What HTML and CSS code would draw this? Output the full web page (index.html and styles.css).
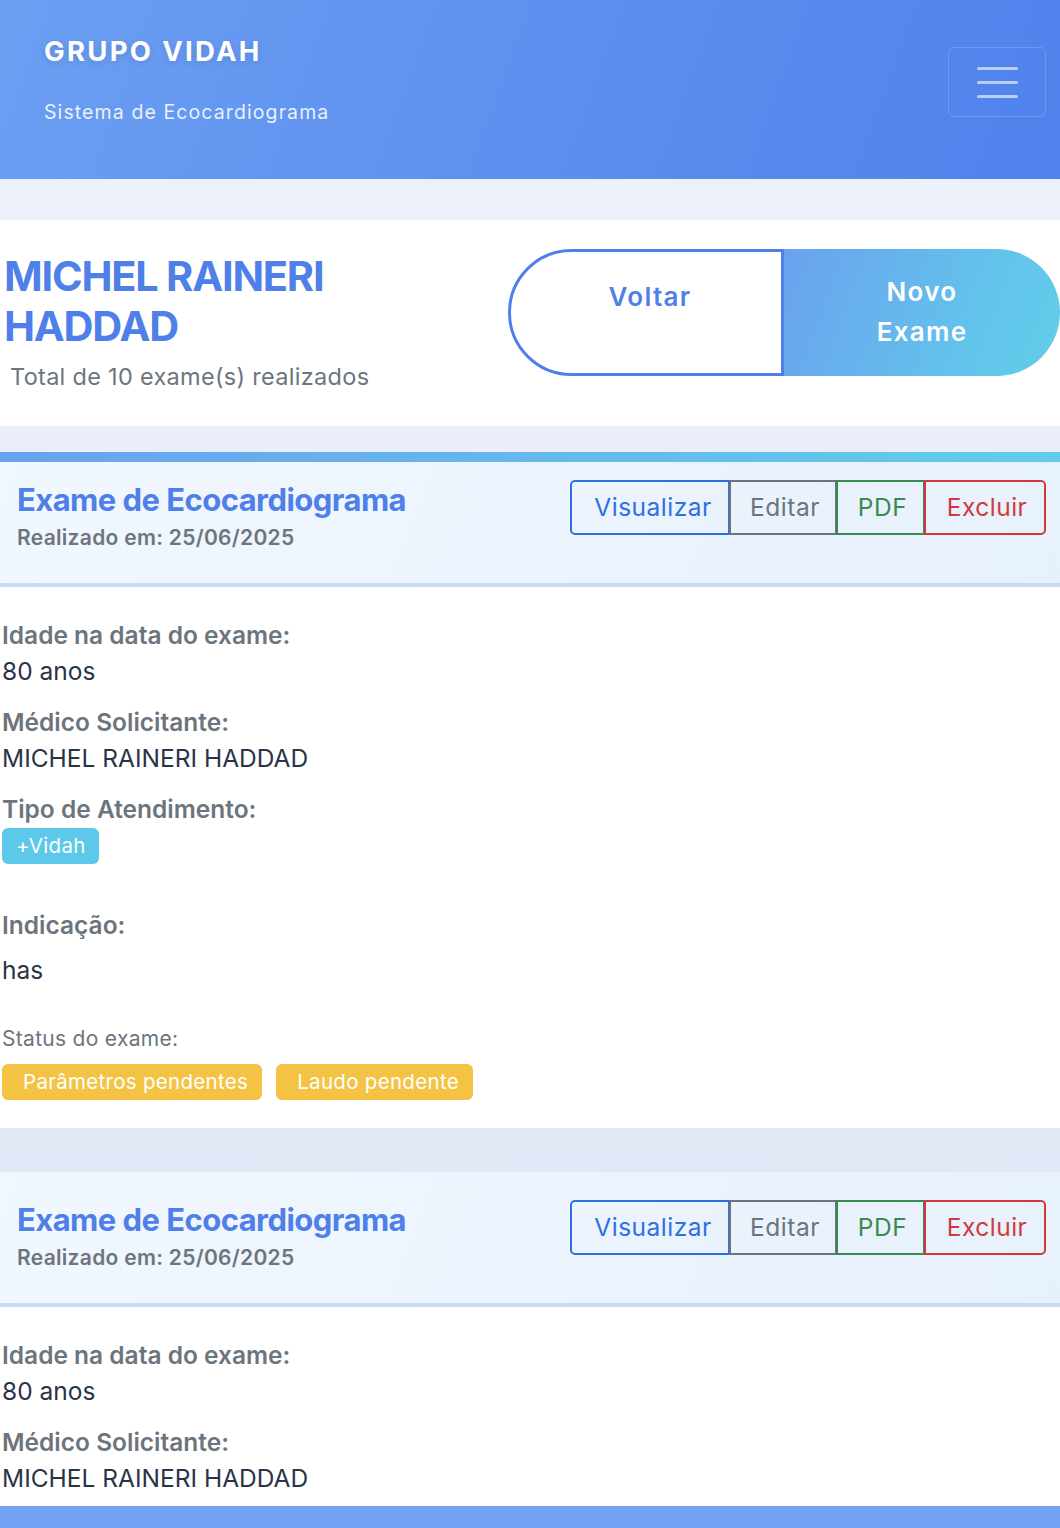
FILE: index.html
```html
<!DOCTYPE html>
<html lang="pt-BR">
<head>
<meta charset="utf-8">
<title>Grupo Vidah - Exames</title>
<link rel="stylesheet" href="styles.css">
</head>
<body>
<header class="topbar">
  <div class="brand">
    <div class="brand-title">GRUPO VIDAH</div>
    <div class="brand-sub">Sistema de Ecocardiograma</div>
  </div>
  <button class="menu-btn" aria-label="Menu">
    <span></span><span></span><span></span>
  </button>
</header>

<section class="patient">
  <div class="patient-info">
    <h1 class="patient-name">MICHEL RAINERI HADDAD</h1>
    <p class="patient-total">Total de 10 exame(s) realizados</p>
  </div>
  <div class="patient-actions">
    <a class="pill pill-back">Voltar</a>
    <a class="pill pill-new">Novo Exame</a>
  </div>
</section>

<article class="exam exam-first">
  <div class="exam-head">
    <div>
      <h2 class="exam-title">Exame de Ecocardiograma</h2>
      <div class="exam-date">Realizado em: 25/06/2025</div>
    </div>
    <div class="btn-group">
      <a class="gbtn gbtn-blue">Visualizar</a>
      <a class="gbtn gbtn-gray">Editar</a>
      <a class="gbtn gbtn-green">PDF</a>
      <a class="gbtn gbtn-red">Excluir</a>
    </div>
  </div>
  <div class="exam-body">
    <div class="field">
      <div class="label">Idade na data do exame:</div>
      <div class="value">80 anos</div>
    </div>
    <div class="field">
      <div class="label">Médico Solicitante:</div>
      <div class="value">MICHEL RAINERI HADDAD</div>
    </div>
    <div class="field field-type">
      <div class="label">Tipo de Atendimento:</div>
      <span class="badge badge-info">+Vidah</span>
    </div>
    <div class="field field-ind">
      <div class="label">Indicação:</div>
      <div class="value value-ind">has</div>
    </div>
    <div class="status">
      <div class="status-label">Status do exame:</div>
      <div class="status-badges">
        <span class="badge badge-warn">Parâmetros pendentes</span>
        <span class="badge badge-warn">Laudo pendente</span>
      </div>
    </div>
  </div>
</article>

<article class="exam">
  <div class="exam-head">
    <div>
      <h2 class="exam-title">Exame de Ecocardiograma</h2>
      <div class="exam-date">Realizado em: 25/06/2025</div>
    </div>
    <div class="btn-group">
      <a class="gbtn gbtn-blue">Visualizar</a>
      <a class="gbtn gbtn-gray">Editar</a>
      <a class="gbtn gbtn-green">PDF</a>
      <a class="gbtn gbtn-red">Excluir</a>
    </div>
  </div>
  <div class="exam-body">
    <div class="field">
      <div class="label">Idade na data do exame:</div>
      <div class="value">80 anos</div>
    </div>
    <div class="field">
      <div class="label">Médico Solicitante:</div>
      <div class="value">MICHEL RAINERI HADDAD</div>
    </div>
    <div class="field field-type">
      <div class="label">Tipo de Atendimento:</div>
      <span class="badge badge-info">+Vidah</span>
    </div>
  </div>
</article>

<div class="bottom-bar"></div>
</body>
</html>
```

FILE: styles.css
```css
* { box-sizing: border-box; }

html, body { margin: 0; padding: 0; }

body {
  font-family: Inter, "Noto Sans", "Liberation Sans", sans-serif;
  background: linear-gradient(180deg, #eef2fa 0%, #e4e9f7 60%, #dde3f5 100%);
  color: #2b3447;
  min-height: 1528px;
}

/* Top bar */
.topbar {
  height: 179px;
  background: linear-gradient(110deg, #6b9ff2 0%, #5f91ef 45%, #4f82ec 100%);
  display: flex;
  justify-content: space-between;
  align-items: flex-start;
  padding: 36px 14px 0 44px;
}
.brand-title {
  color: #fff;
  font-size: 27.5px;
  font-weight: 700;
  letter-spacing: 2.3px;
  line-height: 30px;
  text-shadow: 0 2px 6px rgba(0, 0, 0, 0.12);
}
.brand-sub {
  margin-top: 34px;
  color: rgba(255, 255, 255, 0.88);
  font-size: 19.5px;
  letter-spacing: 1.1px;
  line-height: 24px;
}
.menu-btn {
  margin-top: 11px;
  width: 98px;
  height: 70px;
  border: 1.5px solid rgba(255, 255, 255, 0.16);
  border-radius: 6px;
  background: transparent;
  display: flex;
  flex-direction: column;
  justify-content: center;
  align-items: center;
  gap: 11px;
  padding: 0;
}
.menu-btn span {
  display: block;
  width: 41px;
  height: 3px;
  border-radius: 2px;
  background: rgba(255, 255, 255, 0.6);
}

/* Patient header */
.patient {
  margin-top: 41px;
  background: #fff;
  height: 206px;
  display: flex;
  align-items: flex-start;
  justify-content: space-between;
  padding-top: 29px;
}
.patient-info { padding-left: 4px; width: 480px; padding-top: 2px; }
.patient-name {
  margin: 0;
  color: #4f7fe8;
  font-size: 41.5px;
  line-height: 50px;
  font-weight: 700;
  letter-spacing: -1.2px;
  width: 380px;
}
.patient-total {
  margin: 12px 0 0 6px;
  color: #6c757d;
  font-size: 23.5px;
  line-height: 28px;
  letter-spacing: 0.3px;
}
.patient-actions {
  display: flex;
  width: 552px;
  height: 127px;
}
.pill {
  flex: none;
  width: 50%;
  text-align: center;
  font-size: 26px;
  font-weight: 600;
  letter-spacing: 1.3px;
  line-height: 40px;
  text-decoration: none;
}
.pill-back {
  background: #fff;
  color: #4f7fe8;
  border: 3px solid #4f7fe8;
  border-radius: 64px 0 0 64px;
  padding: 25px 0 0 8px;
}
.pill-new {
  background: linear-gradient(110deg, #6aa2ee 0%, #62c4eb 70%, #62cdea 100%);
  color: #fff;
  border-radius: 0 64px 64px 0;
  padding: 23px 64px 0;
}

/* Exam card */
.exam { margin-top: 26px; }
.exam + .exam { margin-top: 44px; }
.exam-first { border-top: 10px solid transparent; border-image: linear-gradient(90deg, #6aa2ef, #62cdea) 1; }
.exam-head {
  background: linear-gradient(110deg, #f1f7fe 0%, #e7f1fc 100%);
  border-bottom: 4px solid #c6dbf6;
  display: flex;
  justify-content: space-between;
  align-items: flex-start;
  padding: 18px 14px 0 17px;
  height: 125px;
}
.exam + .exam .exam-head { height: 135px; padding-top: 28px; }
.exam-title {
  margin: 0;
  color: #4f7fe8;
  font-size: 31px;
  line-height: 40px;
  font-weight: 700;
  letter-spacing: -0.55px;
}
.exam-date {
  margin-top: 4px;
  color: #6c757d;
  font-size: 21px;
  font-weight: 600;
  line-height: 28px;
  letter-spacing: 0.3px;
}
.btn-group {
  display: flex;
}
.gbtn {
  font-size: 24.5px;
  line-height: 51px;
  height: 55px;
  padding: 0;
  text-align: center;
  border: 2px solid;
  letter-spacing: 0.5px;
  background: transparent;
  text-decoration: none;
}
.gbtn + .gbtn { margin-left: -1px; }
.gbtn-blue { color: #2f6fe6; border-color: #2f6fe6; border-radius: 5px 0 0 5px; width: 160px; padding-left: 6px; }
.gbtn-gray { color: #6c757d; border-color: #6c757d; width: 108px; padding-left: 4px; }
.gbtn-green { color: #388a4e; border-color: #388a4e; width: 89px; padding-left: 4px; }
.gbtn-red { color: #d03a3e; border-color: #d03a3e; border-radius: 0 5px 5px 0; width: 122px; padding-left: 4px; }

.exam-body {
  background: #fff;
  padding: 32px 0 28px 2px;
}
.field { margin-bottom: 19px; }
.label {
  color: #6c757d;
  font-size: 24.5px;
  font-weight: 600;
  line-height: 32px;
}
.value {
  color: #2b3447;
  font-size: 24.5px;
  line-height: 32px;
  margin-top: 4px;
}
.field-type .label { margin-bottom: 3px; }
.field-ind { margin-top: 45px; }
.value-ind { margin-top: 13px; }

.badge {
  display: inline-block;
  color: #fff;
  font-size: 20.5px;
  line-height: 36px;
  height: 36px;
  border-radius: 6px;
  padding: 0 14px 0 21px;
  letter-spacing: 0.3px;
}
.badge-info { background: #5cc8ea; padding: 0 13px 0 14px; }
.badge-warn { background: #f5c343; }

.status { margin-top: 39px; }
.status-label {
  color: #6c757d;
  font-size: 21px;
  line-height: 28px;
  letter-spacing: 0.3px;
}
.status-badges {
  display: flex;
  gap: 14px;
  margin-top: 11px;
}

.bottom-bar {
  position: fixed;
  left: 0;
  right: 0;
  bottom: 0;
  height: 22px;
  background: #72a2f3;
}
```
